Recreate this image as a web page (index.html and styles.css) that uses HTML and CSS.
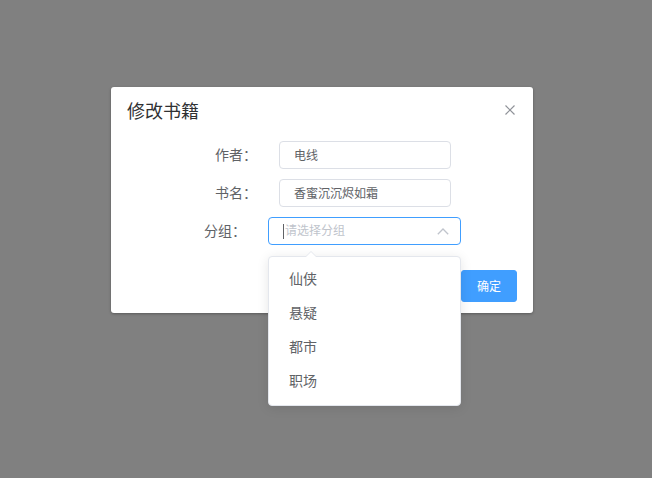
FILE: index.html
```html
<!DOCTYPE html>
<html lang="zh">
<head>
<meta charset="utf-8">
<title>修改书籍</title>
<link rel="stylesheet" href="styles.css">
</head>
<body>
<div class="dialog">
  <div class="dialog-header">
    <span class="dialog-title">修改书籍</span>
    <button class="close" aria-label="关闭">
      <svg width="10" height="10" viewBox="0 0 10 10"><path d="M0.5 0.5L9.5 9.5M9.5 0.5L0.5 9.5" stroke="#909399" stroke-width="1.2" fill="none"/></svg>
    </button>
  </div>
  <div class="dialog-body">
    <div class="row row-a">
      <label class="label">作者：</label>
      <div class="input">电线</div>
    </div>
    <div class="row row-a">
      <label class="label">书名：</label>
      <div class="input">香蜜沉沉烬如霜</div>
    </div>
    <div class="row row-b">
      <label class="label">分组：</label>
      <div class="select">
        <span class="caret"></span>
        <span class="placeholder">请选择分组</span>
        <svg class="chev" width="12" height="7" viewBox="0 0 12 7"><path d="M0.8 6.2L6 1L11.2 6.2" stroke="#C0C4CC" stroke-width="1.3" fill="none"/></svg>
        <div class="dropdown">
          <span class="arrow"></span>
          <ul class="options">
            <li>仙侠</li>
            <li>悬疑</li>
            <li>都市</li>
            <li>职场</li>
          </ul>
        </div>
      </div>
    </div>
  </div>
  <div class="dialog-footer">
    <button class="btn">取消</button>
    <button class="btn btn-primary">确定</button>
  </div>
</div>
</body>
</html>
```

FILE: styles.css
```css
html, body {
  margin: 0;
  padding: 0;
}
body {
  background: #808080;
  width: 652px;
  height: 478px;
  overflow: hidden;
  font-family: "Noto Sans CJK SC", "Noto Sans", sans-serif;
  color: #606266;
  padding-top: 87px;
  box-sizing: border-box;
}
.dialog {
  margin-left: 111px;
  width: 422px;
  height: 226px;
  background: #fff;
  border-radius: 3px;
  box-shadow: 0 1px 3px rgba(0,0,0,0.3);
  box-sizing: border-box;
  display: flex;
  flex-direction: column;
}
.dialog-header {
  display: flex;
  justify-content: space-between;
  align-items: center;
  padding: 11px 18px 1px 16px;
  height: 24px;
}
.dialog-title {
  font-size: 18px;
  line-height: 24px;
  color: #303133;
}
.close {
  border: 0;
  background: none;
  padding: 0;
  width: 10px;
  height: 10px;
  display: flex;
  margin-top: 0;
}
.dialog-body {
  margin-top: 18px;
  display: flex;
  flex-direction: column;
  gap: 10px;
}
.row {
  display: flex;
  align-items: flex-start;
  height: 28px;
}
.row-a { padding-left: 104px; }
.row-b { padding-left: 93px; }
.label {
  font-size: 14px;
  line-height: 26px;
  width: 64px;
  color: #606266;
}
.input {
  width: 172px;
  height: 28px;
  box-sizing: border-box;
  border: 1px solid #DCDFE6;
  border-radius: 4px;
  padding-left: 14px;
  font-size: 12px;
  line-height: 25px;
  color: #606266;
}
.select {
  position: relative;
  width: 193px;
  height: 28px;
  box-sizing: border-box;
  border: 1px solid #409EFF;
  border-radius: 4px;
  padding-left: 14px;
  display: flex;
  align-items: center;
  font-size: 12px;
}
.caret {
  width: 1px;
  height: 15px;
  background: #606266;
  margin-right: 1px;
}
.placeholder {
  color: #C0C4CC;
  line-height: 24px;
  padding-bottom: 2px;
}
.chev {
  margin-left: auto;
  margin-right: 11px;
}
.dropdown {
  position: absolute;
  left: -1px;
  top: 38px;
  width: 193px;
  box-sizing: border-box;
  background: #fff;
  border: 1px solid #E4E7ED;
  border-radius: 4px;
  box-shadow: 0 2px 12px rgba(0,0,0,0.1);
  z-index: 10;
}
.arrow {
  position: absolute;
  left: 36px;
  top: -6px;
  width: 0;
  height: 0;
  border-left: 6px solid transparent;
  border-right: 6px solid transparent;
  border-bottom: 6px solid #E4E7ED;
}
.arrow::after {
  content: "";
  position: absolute;
  left: -6px;
  top: 1px;
  border-left: 6px solid transparent;
  border-right: 6px solid transparent;
  border-bottom: 6px solid #fff;
}
.options {
  list-style: none;
  margin: 0;
  padding: 6px 0;
}
.options li {
  height: 34px;
  line-height: 31px;
  box-sizing: border-box;
  padding: 0 0 3px 20px;
  font-size: 14px;
  color: #606266;
}
.dialog-footer {
  margin-top: auto;
  display: flex;
  justify-content: flex-end;
  gap: 10px;
  padding: 0 16px 11px 0;
}
.btn {
  height: 32px;
  padding: 0 15px 1px;
  font-size: 12px;
  font-family: inherit;
  border-radius: 3px;
  border: 1px solid #DCDFE6;
  background: #fff;
  color: #606266;
}
.btn-primary {
  width: 56px;
  background: #409EFF;
  border-color: #409EFF;
  color: #fff;
}
```
